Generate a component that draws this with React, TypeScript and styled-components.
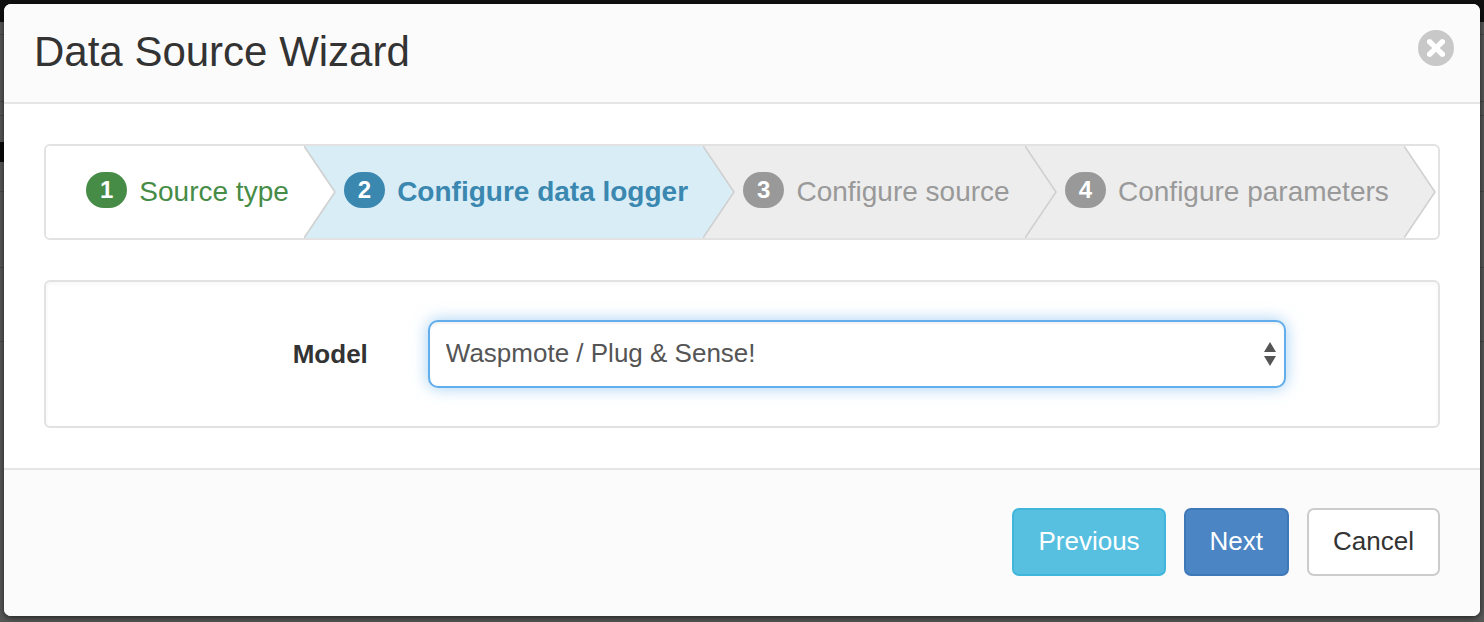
import React, { useState } from "react";
import styled, { createGlobalStyle, css } from "styled-components";

type StepState = "done" | "active" | "upcoming";
type ButtonTone = "info" | "primary" | "plain";

const GlobalStyle = createGlobalStyle`
  *, *::before, *::after { box-sizing: border-box; }
  body {
    margin: 0;
    background: #585858;
    font-family: "Liberation Sans", Arial, Helvetica, sans-serif;
    color: #333;
  }
`;

const Backdrop = styled.div`
  min-height: 100vh;
  padding: 4px 4px 6px;
  background:
    linear-gradient(#0a0a0a, #0a0a0a) 0 142px / 4px 20px no-repeat,
    linear-gradient(
      #101010 22px, transparent 22px,
      transparent 34px, #484848 34px, #484848 35px, transparent 35px,
      transparent 101px, #484848 101px, #484848 102px, transparent 102px,
      transparent 115px, #484848 115px, #484848 116px, transparent 116px,
      transparent 191px, #484848 191px, #484848 192px, transparent 192px,
      transparent 267px, #484848 267px, #484848 268px, transparent 268px,
      transparent 341px, #484848 341px, #484848 342px, transparent 342px
    ),
    #585858;
`;

const Dialog = styled.section`
  overflow: hidden;
  border-radius: 7px;
  background: #fff;
  box-shadow: 0 2px 6px rgba(0, 0, 0, 0.6);
`;

const Header = styled.header`
  display: flex;
  align-items: flex-start;
  justify-content: space-between;
  padding: 18px 26px 20px 30px;
  border-bottom: 2px solid #e5e5e5;
  background: #fbfbfb;
`;

const Title = styled.h1`
  margin: 0;
  font-size: 42px;
  line-height: 60px;
  font-weight: 400;
`;

const CloseButton = styled.button`
  display: block;
  width: 36px;
  height: 36px;
  margin: 8px 0 0;
  padding: 0;
  border: 0;
  background: none;
  cursor: pointer;

  svg { display: block; }
`;

const Body = styled.div`
  display: grid;
  gap: 40px;
  padding: 40px;
`;

const Steps = styled.ol`
  display: flex;
  height: 96px;
  margin: 0;
  padding: 0;
  list-style: none;
  overflow: hidden;
  border: 2px solid #e2e2e2;
  border-radius: 6px;
  background: #fff;
`;

const stepTones = {
  done: { fill: "#fff", text: "#468c46", badge: "#468c46" },
  active: { fill: "#d9edf7", text: "#3a87b0", badge: "#3a87b0" },
  upcoming: { fill: "#ededed", text: "#999", badge: "#999" },
};

const StepItem = styled.li<{ $state: StepState }>`
  position: relative;
  display: flex;
  align-items: center;
  gap: 12px;
  padding: 0 15px 0 40px;
  background: ${(p) => stepTones[p.$state].fill};
  color: ${(p) => stepTones[p.$state].text};
  font-size: 28px;
  line-height: 40px;
  font-weight: ${(p) => (p.$state === "active" ? 700 : 400)};
  white-space: nowrap;
`;

const Badge = styled.span<{ $state: StepState }>`
  margin-bottom: 4px;
  padding: 0 14px;
  border-radius: 18px;
  background: ${(p) => stepTones[p.$state].badge};
  color: #fff;
  font-size: 24px;
  line-height: 36px;
  font-weight: 700;
`;

const Chevron = styled.svg<{ $state: StepState }>`
  position: absolute;
  z-index: 1;
  top: 0;
  left: 100%;
  width: 32px;
  height: 100%;
  fill: ${(p) => stepTones[p.$state].fill};
`;

const Panel = styled.form`
  display: grid;
  grid-template-columns: 3fr 8fr;
  align-items: center;
  gap: 60px;
  padding: 38px 152px 38px 0;
  border: 2px solid #e2e2e2;
  border-radius: 6px;
  box-shadow: inset 0 2px 4px rgba(0, 0, 0, 0.04);
`;

const Label = styled.label`
  text-align: right;
  font-size: 26px;
  line-height: 36px;
  font-weight: 700;
`;

const SelectWrap = styled.div`
  position: relative;
`;

const Select = styled.select`
  display: block;
  width: 100%;
  height: 68px;
  padding: 0 40px 2px 16px;
  appearance: none;
  border: 2px solid #62adeb;
  border-radius: 10px;
  outline: 0;
  background: #fff;
  box-shadow: inset 0 2px 2px rgba(0, 0, 0, 0.06), 0 0 16px rgba(102, 175, 233, 0.6);
  color: #555;
  font-family: inherit;
  font-size: 26px;
`;

const SelectArrows = styled.svg`
  position: absolute;
  top: 22px;
  right: 10px;
  fill: #555;
  pointer-events: none;
`;

const Footer = styled.footer`
  display: flex;
  justify-content: flex-end;
  gap: 18px;
  padding: 38px 40px 40px;
  border-top: 2px solid #e5e5e5;
  background: #fbfbfb;
`;

const buttonTones = {
  info: css`
    border-color: #40b6dc;
    background: #57c0e0;
    color: #fff;
  `,
  primary: css`
    border-color: #3f78b8;
    background: #4b85c4;
    color: #fff;
  `,
  plain: css`
    border-color: #ccc;
    background: #fff;
    color: #333;
  `,
};

const Button = styled.button<{ $tone: ButtonTone }>`
  height: 68px;
  padding: 0 24px 2px;
  border: 2px solid;
  border-radius: 7px;
  font-family: inherit;
  font-size: 26px;
  line-height: 36px;
  cursor: pointer;
  ${(p) => buttonTones[p.$tone]}
`;

const steps: { label: string; state: StepState }[] = [
  { label: "Source type", state: "done" },
  { label: "Configure data logger", state: "active" },
  { label: "Configure source", state: "upcoming" },
  { label: "Configure parameters", state: "upcoming" },
];

export default function App() {
  const [model, setModel] = useState("waspmote");

  return (
    <Backdrop>
      <GlobalStyle />
      <Dialog role="dialog" aria-labelledby="wizard-title">
        <Header>
          <Title id="wizard-title">Data Source Wizard</Title>
          <CloseButton type="button" aria-label="Close">
            <svg width="36" height="36" viewBox="0 0 36 36">
              <circle cx="18" cy="18" r="18" fill="#c8c8c8" />
              <path
                d="M10.2 9.2H13L18 14.3 23 9.2H25.8L27 10.4V13L21.8 18 27 23V25.6L25.8 26.8H23L18 21.7 13 26.8H10.2L9 25.6V23L14.2 18 9 13V10.4Z"
                fill="#fff"
              />
            </svg>
          </CloseButton>
        </Header>

        <Body>
          <Steps>
            {steps.map((step, i) => (
              <StepItem key={step.label} $state={step.state} aria-current={step.state === "active" ? "step" : undefined}>
                <Badge $state={step.state}>{i + 1}</Badge>
                {step.label}
                <Chevron $state={step.state} viewBox="0 0 32 92" preserveAspectRatio="none" aria-hidden="true">
                  <path d="M-1 0H0L31 46 0 92H-1Z" />
                  <path d="M0 0 31 46 0 92" fill="none" stroke="#d0d0d0" strokeWidth="1.6" />
                </Chevron>
              </StepItem>
            ))}
          </Steps>

          <Panel>
            <Label htmlFor="model">Model</Label>
            <SelectWrap>
              <Select id="model" value={model} onChange={(e) => setModel(e.target.value)}>
                <option value="waspmote">Waspmote / Plug &amp; Sense!</option>
              </Select>
              <SelectArrows width="12" height="24" viewBox="0 0 12 24" aria-hidden="true">
                <path d="M6 0 12 10H0ZM6 24 0 14H12Z" />
              </SelectArrows>
            </SelectWrap>
          </Panel>
        </Body>

        <Footer>
          <Button type="button" $tone="info">Previous</Button>
          <Button type="button" $tone="primary">Next</Button>
          <Button type="button" $tone="plain">Cancel</Button>
        </Footer>
      </Dialog>
    </Backdrop>
  );
}
